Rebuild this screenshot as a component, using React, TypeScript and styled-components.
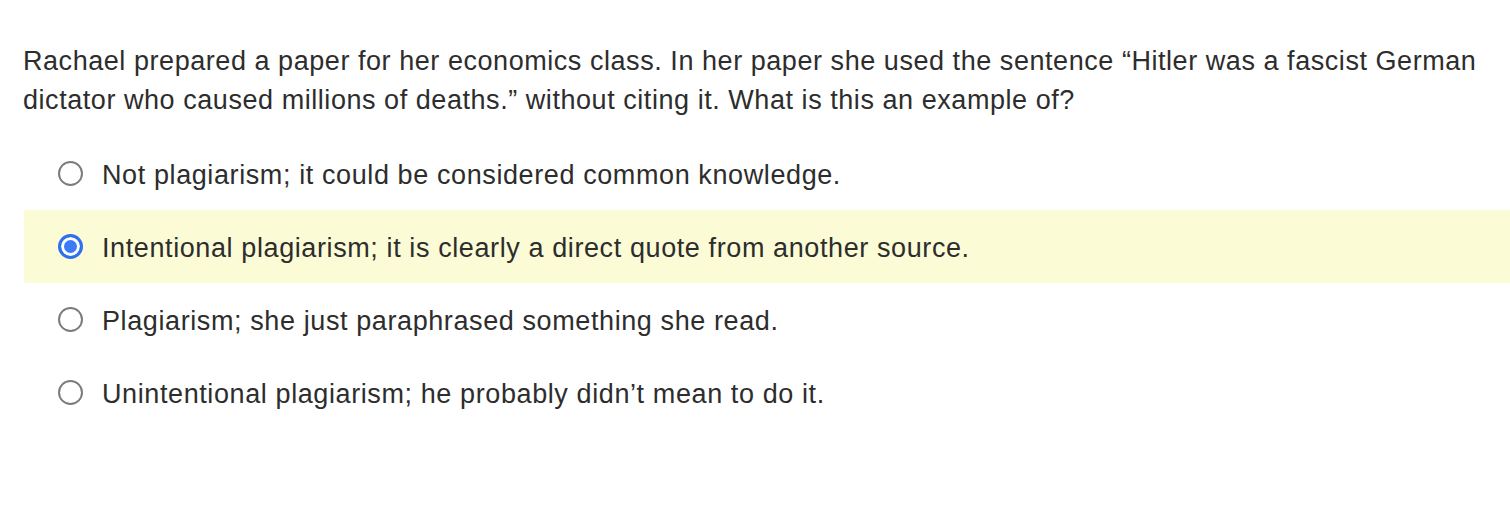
import React from "react";
import styled, { createGlobalStyle } from "styled-components";

const Global = createGlobalStyle`
  html, body { margin: 0; padding: 0; background: #ffffff; }
  body { font-family: "Liberation Sans", Arial, Helvetica, sans-serif; color: #333333; }
`;

const Page = styled.div`
  padding: 42px 0 0 23px;
`;

const Question = styled.p`
  margin: 0 0 17px 0;
  font-size: 27px;
  letter-spacing: 0.55px;
  line-height: 39px;
  color: #2d2d2d;
  max-width: 1472px;
`;

const Options = styled.div`
  display: flex;
  flex-direction: column;
  margin-left: 1px;
`;

const Row = styled.label<{ $selected?: boolean }>`
  display: flex;
  align-items: center;
  height: 73px;
  padding-left: 34px;
  gap: 19px;
  background: ${(p) => (p.$selected ? "#fbfbd6" : "transparent")};
  font-size: 27px;
  letter-spacing: 0.6px;
  color: #2d2d2d;
  cursor: pointer;
`;

const Label = styled.span`
  padding-top: 4px;
`;

const Radio = styled.span<{ $checked?: boolean }>`
  box-sizing: border-box;
  width: 25px;
  height: 25px;
  border-radius: 50%;
  flex-shrink: 0;
  border: ${(p) => (p.$checked ? "3px solid #2f6ff0" : "2px solid #7c7c7c")};
  background: ${(p) => (p.$checked ? "#3b7bf6" : "#ffffff")};
  box-shadow: ${(p) => (p.$checked ? "inset 0 0 0 3px #ffffff" : "none")};
`;

const options = [
  "Not plagiarism; it could be considered common knowledge.",
  "Intentional plagiarism; it is clearly a direct quote from another source.",
  "Plagiarism; she just paraphrased something she read.",
  "Unintentional plagiarism; he probably didn\u2019t mean to do it.",
];

export default function App() {
  const selected = 1;
  return (
    <>
      <Global />
      <Page>
        <Question>
          Rachael prepared a paper for her economics class. In her paper she used the sentence
          {" \u201C"}Hitler was a fascist German dictator who caused millions of deaths.{"\u201D"} without
          citing it. What is this an example of?
        </Question>
        <Options>
          {options.map((o, i) => (
            <Row key={i} $selected={i === selected}>
              <Radio $checked={i === selected} />
              <Label>{o}</Label>
            </Row>
          ))}
        </Options>
      </Page>
    </>
  );
}
